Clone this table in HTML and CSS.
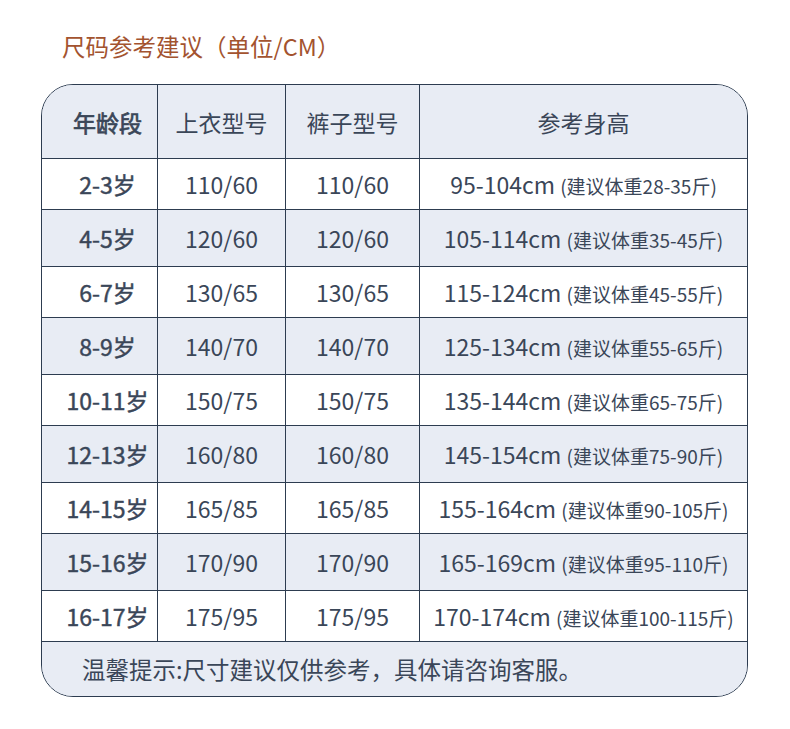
FILE: index.html
```html
<!DOCTYPE html>
<html lang="zh">
<head>
<meta charset="utf-8">
<title>尺码参考建议</title>
<link rel="stylesheet" href="styles.css">
</head>
<body>
<div class="page">
  <h1 class="title">尺码参考建议（单位/CM）</h1>
  <div class="card">
    <table class="size-table">
      <colgroup>
        <col class="c1"><col class="c2"><col class="c3"><col class="c4">
      </colgroup>
      <thead>
        <tr class="head">
          <th class="age">年龄段</th>
          <th>上衣型号</th>
          <th>裤子型号</th>
          <th class="last">参考身高</th>
        </tr>
      </thead>
      <tbody>
        <tr class="r-w"><td class="age">2-3岁</td><td>110/60</td><td>110/60</td><td class="last">95-104cm <span class="wt">(建议体重28-35斤)</span></td></tr>
        <tr class="r-b"><td class="age">4-5岁</td><td>120/60</td><td>120/60</td><td class="last">105-114cm <span class="wt">(建议体重35-45斤)</span></td></tr>
        <tr class="r-w"><td class="age">6-7岁</td><td>130/65</td><td>130/65</td><td class="last">115-124cm <span class="wt">(建议体重45-55斤)</span></td></tr>
        <tr class="r-b"><td class="age">8-9岁</td><td>140/70</td><td>140/70</td><td class="last">125-134cm <span class="wt">(建议体重55-65斤)</span></td></tr>
        <tr class="r-w"><td class="age">10-11岁</td><td>150/75</td><td>150/75</td><td class="last">135-144cm <span class="wt">(建议体重65-75斤)</span></td></tr>
        <tr class="r-b"><td class="age">12-13岁</td><td>160/80</td><td>160/80</td><td class="last">145-154cm <span class="wt">(建议体重75-90斤)</span></td></tr>
        <tr class="r-w"><td class="age">14-15岁</td><td>165/85</td><td>165/85</td><td class="last">155-164cm <span class="wt">(建议体重90-105斤)</span></td></tr>
        <tr class="r-b"><td class="age">15-16岁</td><td>170/90</td><td>170/90</td><td class="last">165-169cm <span class="wt">(建议体重95-110斤)</span></td></tr>
        <tr class="r-w"><td class="age">16-17岁</td><td>175/95</td><td>175/95</td><td class="last">170-174cm <span class="wt">(建议体重100-115斤)</span></td></tr>
      </tbody>
    </table>
    <div class="note">温馨提示:尺寸建议仅供参考，具体请咨询客服。</div>
  </div>
</div>
</body>
</html>
```

FILE: styles.css
```css
html, body {
  margin: 0;
  padding: 0;
  background: #ffffff;
}

body {
  font-family: "Noto Sans CJK SC", "Noto Sans", sans-serif;
  color: #3a4658;
}

.page {
  width: 790px;
  height: 729px;
  padding-top: 31px;
  box-sizing: border-box;
}

.title {
  margin: 0 0 23px 62px;
  font-size: 23.5px;
  line-height: 30px;
  font-weight: 400;
  color: #a3532f;
}

.card {
  margin-left: 41px;
  width: 707px;
  box-sizing: border-box;
  border: 1px solid #2d3c50;
  border-radius: 32px;
  overflow: hidden;
  background: #e8ecf4;
}

.size-table {
  width: 705px;
  border-collapse: separate;
  border-spacing: 0;
  table-layout: fixed;
}

.c1 { width: 116px; }
.c2 { width: 128px; }
.c3 { width: 134px; }
.c4 { width: 327px; }

.size-table th,
.size-table td {
  padding: 0;
  text-align: center;
  vertical-align: middle;
  border-right: 1px solid #2d3c50;
  border-bottom: 1px solid #2d3c50;
  font-size: 23px;
  font-weight: 400;
  white-space: nowrap;
  box-sizing: border-box;
}

.size-table .last {
  border-right: none;
}

.size-table .age {
  padding-left: 16px;
  -webkit-text-stroke: 0.45px currentColor;
}

.size-table th.age {
  -webkit-text-stroke: 0.7px currentColor;
}

.head th {
  height: 74px;
  background: #e8ecf4;
}

.r-w td {
  height: 51px;
  background: #ffffff;
}

.r-b td {
  height: 57px;
  background: #e8ecf4;
}

.wt {
  font-size: 19px;
}

.note {
  height: 54px;
  line-height: 54px;
  padding-left: 40px;
  font-size: 23.5px;
  background: #e8ecf4;
}
```
